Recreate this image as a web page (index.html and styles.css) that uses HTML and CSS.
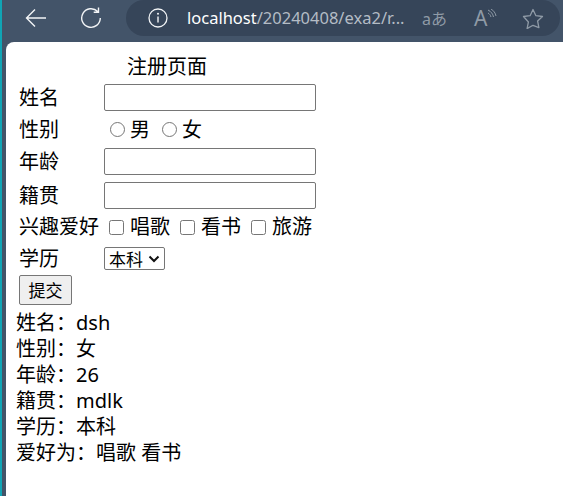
FILE: index.html
```html
<!DOCTYPE html>
<html lang="zh">
<head>
<meta charset="utf-8">
<title>注册页面</title>
<link rel="stylesheet" href="styles.css">
</head>
<body>
<header class="toolbar">
  <button class="nav-btn" aria-label="后退">
    <svg width="22" height="22" viewBox="0 0 22 22"><path d="M21 11H2M10 2.500 1.500 11l8.500 8.500" fill="none" stroke="#f2f4f6" stroke-width="1.400"/></svg>
  </button>
  <button class="nav-btn nav-reload" aria-label="刷新">
    <svg width="22" height="22" viewBox="0 0 22 22"><path d="M17.700 4.600A9.300 9.300 0 1 0 20.300 11M18.500 .5v4.800h-4.800" fill="none" stroke="#f2f4f6" stroke-width="1.400"/></svg>
  </button>
  <div class="address">
    <svg class="info" width="20" height="20" viewBox="0 0 20 20"><circle cx="10" cy="10" r="9" fill="none" stroke="#f2f4f6" stroke-width="1.300"/><path d="M10 8.500v6" stroke="#f2f4f6" stroke-width="1.400"/><circle cx="10" cy="5.800" r="1" fill="#f2f4f6"/></svg>
    <span class="url"><span class="host">localhost</span>/20240408/exa2/r...</span>
    <span class="tool-text">aあ</span>
    <span class="tool-read">A<svg width="10" height="12" viewBox="0 0 10 12"><path d="M1 1c3 1.500 5 4 5.500 7M1 4c1.500 .8 2.500 2 3 4M4 0c2.500 1.500 4.500 4 5 7" fill="none" stroke="#8f9aa6" stroke-width="1"/></svg></span>
    <svg class="star" width="22" height="21" viewBox="0 0 22 21"><path d="M11 1.500l2.900 6.200 6.600.8-4.900 4.500 1.300 6.600L11 17.300l-5.900 3.300 1.300-6.600L1.500 8.500l6.600-.8z" fill="none" stroke="#8f9aa6" stroke-width="1.300" stroke-linejoin="round"/></svg>
  </div>
</header>
<main class="page">
  <form>
    <table class="form-table">
      <tr><td colspan="2" class="title">注册页面</td></tr>
      <tr><td class="label">姓名</td><td><input class="field" type="text"></td></tr>
      <tr class="row-radio"><td class="label">性别</td><td class="options options-radio"><label><input class="mark" type="radio" name="sex">男</label><label><input class="mark" type="radio" name="sex">女</label></td></tr>
      <tr><td class="label">年龄</td><td><input class="field" type="text"></td></tr>
      <tr><td class="label">籍贯</td><td><input class="field" type="text"></td></tr>
      <tr class="row-check"><td class="label">兴趣爱好</td><td class="options"><label><input class="mark" type="checkbox">唱歌</label><label><input class="mark" type="checkbox">看书</label><label><input class="mark" type="checkbox">旅游</label></td></tr>
      <tr class="row-select"><td class="label">学历</td><td><select class="picker"><option>本科</option></select></td></tr>
      <tr><td colspan="2"><button class="submit" type="button">提交</button></td></tr>
    </table>
  </form>
  <div class="result">
    <div>姓名：dsh</div>
    <div>性别：女</div>
    <div>年龄：26</div>
    <div>籍贯：mdlk</div>
    <div>学历：本科</div>
    <div>爱好为：唱歌 看书</div>
  </div>
</main>
</body>
</html>
```
FILE: styles.css
```css
* { box-sizing: border-box; }
html, body { height: 100%; }
body {
  margin: 0;
  overflow: hidden;
  display: flex;
  flex-direction: column;
  background: #435469;
  border-left: 2px solid #10a5b5;
  font-family: "Noto Sans", "Noto Sans CJK SC", sans-serif;
  font-size: 20px;
  color: #000;
}
.toolbar {
  height: 42px;
  flex: none;
  display: flex;
  align-items: flex-start;
  padding-left: 23px;
}
.nav-btn {
  width: 22px;
  height: 22px;
  margin-top: 7px;
  padding: 0;
  border: 0;
  background: none;
  display: block;
}
.nav-reload { margin-left: 33px; }
.address {
  width: 434px;
  height: 36px;
  margin-left: 24px;
  border-radius: 18px;
  background: #364559;
  display: flex;
  align-items: center;
  padding-left: 22px;
  font-size: 16.500px;
  color: #b4bcc5;
}
.url { margin-left: 19px; width: 235px; white-space: nowrap; line-height: 36px; }
.host { color: #fff; }
.tool-text { width: 52px; color: #8f9aa6; font-size: 16px; }
.tool-read { width: 48px; color: #8f9aa6; font-size: 21px; display: flex; align-items: flex-start; }
.tool-read svg { margin-top: 5px; }
.page {
  flex: 1;
  margin-left: 4px;
  padding: 10px 0 0 10px;
  background: #fff;
  border-top-left-radius: 8px;
}
.form-table { border-spacing: 2px; border-collapse: separate; }
.form-table td { padding: 1px; line-height: 26px; white-space: nowrap; }
.form-table .title { text-align: center; line-height: 24px; padding-right: 3px; }
.form-table .label { padding-right: 2px; }
.form-table .row-radio td { line-height: 25px; padding-bottom: 2px; }
.form-table .row-check td { padding-top: 0; padding-bottom: 2px; }
.form-table .row-select td { line-height: 25px; }
.field {
  display: block;
  width: 212px;
  height: 27px;
  margin: 1px 0 2px;
  padding: 1px 2px;
  border: 1px solid #767676;
  border-radius: 2px;
  background: #fff;
}
.options label { display: inline-flex; align-items: center; margin-right: 5px; }
.options .mark { width: 15px; height: 15px; margin: 0 6px 0 5px; }
.options-radio label { margin-right: 6px; }
.options-radio .mark { margin: 0 5px 0 6px; }
.picker {
  display: block;
  width: 61px;
  height: 23px;
  margin: 1px 0 0;
  padding: 0 0 0 4px;
  font: 17px/21px "Noto Sans CJK SC", sans-serif;
  color: #000;
  border: 1px solid #767676;
  border-radius: 2px;
  appearance: none;
  background: #fff url("data:image/svg+xml,%3Csvg xmlns='http://www.w3.org/2000/svg' width='12' height='8'%3E%3Cpath d='M1.500 1.500 6 6l4.500-4.500' fill='none' stroke='%23111' stroke-width='2'/%3E%3C/svg%3E") no-repeat right 4px center;
}
.submit {
  display: block;
  width: 53px;
  height: 30px;
  padding: 0;
  font: 17px "Noto Sans CJK SC", sans-serif;
  color: #000;
  border: 1px solid #767676;
  border-radius: 2px;
  background: #efefef;
}
.result { line-height: 26px; padding-top: 2px; }
```
